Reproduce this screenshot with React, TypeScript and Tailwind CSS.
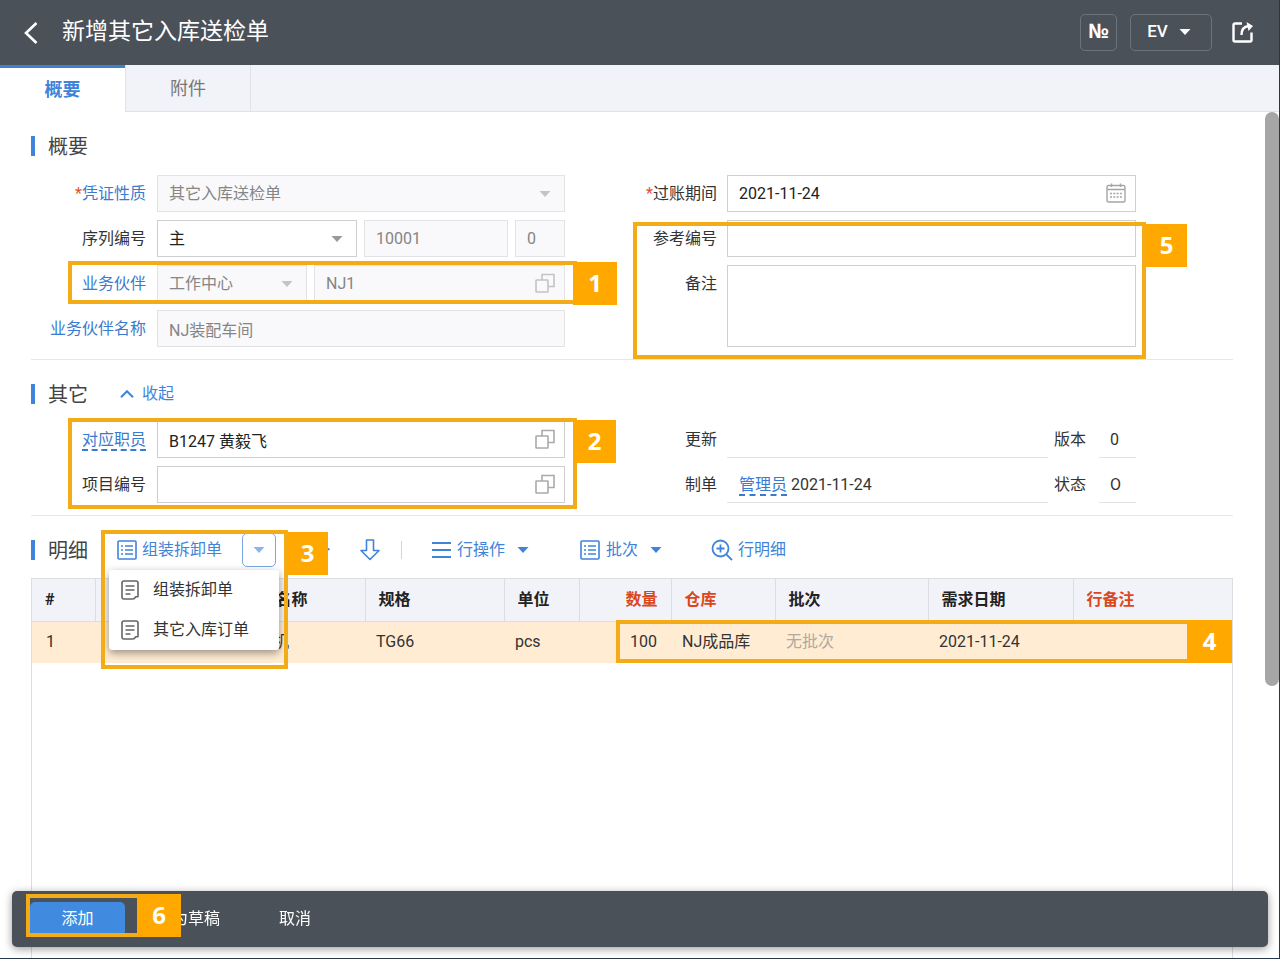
import type { ReactNode } from 'react';
import { clsx } from 'clsx';

function Caret({ className }: { className?: string }) {
  return (
    <svg viewBox="0 0 12 6" className={clsx('w-3 h-[6px] shrink-0 pointer-events-none', className)} fill="currentColor">
      <path d="M0.5 0h11L6 6z" />
    </svg>
  );
}

function CopyIcon({ className }: { className?: string }) {
  return (
    <svg viewBox="0 0 20 20" className={clsx('w-5 h-5', className)} fill="none" stroke="currentColor" strokeWidth="1.6">
      <rect x="1" y="7" width="12" height="12" rx="0.5" />
      <path d="M7 7V1.500h12v12h-6" />
    </svg>
  );
}

function CalendarIcon() {
  return (
    <svg viewBox="0 0 20 20" className="w-5 h-5 text-[#a5a5a5]" fill="none" stroke="currentColor" strokeWidth="1.4">
      <rect x="1" y="2.500" width="18" height="16.500" rx="1.500" />
      <path d="M1 6.500h18M5.500 0.500v3.500M14.500 0.500v3.500" />
      <path d="M4 10.500h12M4 14h12" strokeWidth="1.500" strokeDasharray="2 1.300" />
    </svg>
  );
}

function ListIcon() {
  return (
    <svg viewBox="0 0 20 20" className="w-5 h-5 shrink-0" fill="none" stroke="currentColor" strokeWidth="1.6">
      <rect x="1" y="1" width="18" height="18" rx="1" />
      <path d="M4 6h2M8 6h8M4 10h2M8 10h8M4 14h2M8 14h8" strokeWidth="1.4" />
    </svg>
  );
}

function NoteIcon() {
  return (
    <svg viewBox="0 0 18 20" className="w-[18px] h-5 shrink-0 text-[#666]" fill="none" stroke="currentColor" strokeWidth="1.6">
      <path d="M3 1h12a2 2 0 0 1 2 2v13.500l-2.500.5c-.5 1.500-1.500 2-3 2H3c-1.200 0-2-.8-2-2V3c0-1.200.8-2 2-2z" />
      <path d="M4.500 6h9M4.500 10h9M4.500 14h5" />
    </svg>
  );
}

function ArrowIcon({ up }: { up?: boolean }) {
  return (
    <svg
      viewBox="0 0 20 22"
      className={clsx('w-5 h-[22px]', up && 'rotate-180')}
      fill="none"
      stroke="currentColor"
      strokeWidth="1.6"
      strokeLinejoin="round"
    >
      <path d="M6.500 1h7v10.500H19L10 20.500 1 11.500h5.500z" />
    </svg>
  );
}

function Badge({ n, className }: { n: number; className: string }) {
  return (
    <span
      className={clsx(
        'absolute flex items-center justify-center pb-0.5 bg-[#ffa900] text-white font-bold text-2xl leading-none',
        "font-['Open_Sans',sans-serif]",
        className,
      )}
    >
      {n}
    </span>
  );
}

function Callout({ n, className, badge }: { n: number; className: string; badge: string }) {
  return (
    <div className={clsx('absolute z-20 border-4 border-[#f3ab18] pointer-events-none', className)}>
      <Badge n={n} className={badge} />
    </div>
  );
}

function SectionTitle({ children }: { children: ReactNode }) {
  return (
    <h2 className="flex items-center h-5 border-l-4 border-[#3f84da] pt-0.5 pl-[13px] text-xl leading-5 text-[#444]">
      {children}
    </h2>
  );
}

type FieldLabelProps = {
  htmlFor: string;
  children: ReactNode;
  right?: boolean;
  link?: boolean;
  dashed?: boolean;
  required?: boolean;
};

function FieldLabel({ htmlFor, children, right, link, dashed, required }: FieldLabelProps) {
  return (
    <label
      htmlFor={htmlFor}
      className={clsx(
        'shrink-0 h-[37px] leading-[37px] text-right whitespace-nowrap',
        right ? 'w-[152px] mr-[10px]' : 'w-[115px] mr-[11px]',
        link ? 'text-[#3a7bd0]' : 'text-[#333]',
      )}
    >
      {required && <span className="text-[#e8502e]">*</span>}
      <span className={clsx(dashed && 'border-b-2 border-dashed border-[#3a7bd0]')}>{children}</span>
    </label>
  );
}

const box = 'w-full h-[37px] border px-[11px] outline-none';
const enabled = 'bg-white border-[#cfcfd2] text-[#222]';
const disabledBox = 'bg-[#f9f9fb] border-[#e3e3e6] text-[#858585]';

type SelectBoxProps = { id: string; value: string; disabled?: boolean; label?: string; className?: string };

function SelectBox({ id, value, disabled, label, className }: SelectBoxProps) {
  return (
    <div className={clsx('relative', className)}>
      <select
        id={id}
        aria-label={label}
        disabled={disabled}
        className={clsx(box, 'appearance-none opacity-100', disabled ? disabledBox : enabled)}
      >
        <option>{value}</option>
      </select>
      <Caret className={clsx('absolute right-[14px] top-4', disabled ? 'text-[#c4c4c6]' : 'text-[#999]')} />
    </div>
  );
}

type TextBoxProps = {
  id: string;
  value?: string;
  disabled?: boolean;
  label?: string;
  icon?: ReactNode;
  className?: string;
};

function TextBox({ id, value = '', disabled, label, icon, className }: TextBoxProps) {
  return (
    <div className={clsx('relative', className)}>
      <input
        id={id}
        aria-label={label}
        disabled={disabled}
        defaultValue={value}
        className={clsx(box, disabled ? disabledBox : enabled)}
      />
      {icon && <span className="absolute right-[10px] top-2">{icon}</span>}
    </div>
  );
}

const columns = [
  { name: '#', width: 'w-[63px]' },
  { name: '', width: 'w-[167px]' },
  { name: '名称', width: 'w-[103px]' },
  { name: '规格', width: 'w-[139px]' },
  { name: '单位', width: 'w-[75px]' },
  { name: '数量', width: 'w-[92px]', red: true, numeric: true },
  { name: '仓库', width: 'w-[104px]', red: true },
  { name: '批次', width: 'w-[153px]' },
  { name: '需求日期', width: 'w-[145px]' },
  { name: '行备注', width: 'w-auto', red: true },
];

const row = ['1', '', '机', 'TG66', 'pcs', '100', 'NJ成品库', '无批次', '2021-11-24', ''];

export default function App() {
  return (
    <div className="relative min-h-screen flex flex-col bg-white border-r border-b border-[#26384a] text-base text-[#333] font-[Roboto,'Noto_Sans_CJK_SC',sans-serif]">
      <header className="flex items-center h-[65px] bg-[#4a5159] pl-6 pr-[26px] text-white">
        <button aria-label="返回" className="mr-6">
          <svg viewBox="0 0 14 22" className="w-[14px] h-[22px]" fill="none" stroke="currentColor" strokeWidth="2.600">
            <path d="M12.500 1L2 11l10.500 10" />
          </svg>
        </button>
        <h1 className="text-[23px] leading-8 pb-0.5">新增其它入库送检单</h1>
        <button className="flex items-center justify-center ml-auto mr-[13px] w-[37px] h-[37px] pb-1 border border-[#6b747d] rounded-[5px] font-['Open_Sans',sans-serif] font-bold text-xl">
          №
        </button>
        <button className="flex items-center justify-center gap-[11px] w-[82px] h-[37px] pb-0.5 pr-1 mr-5 border border-[#6b747d] rounded-[5px] font-medium text-[17px]">
          EV
          <Caret />
        </button>
        <button aria-label="分享">
          <svg viewBox="0 0 21 21" className="w-[21px] h-[21px]" fill="none" stroke="currentColor" strokeWidth="2.400">
            <path d="M10 1.500H3A1.500 1.500 0 0 0 1.500 3v15A1.500 1.500 0 0 0 3 19.500h15a1.500 1.500 0 0 0 1.500-1.500v-7.500" />
            <path d="M9.500 13c0-6 2.500-8.500 7-9" />
            <path d="M14.500 0l6.500 4-4.500 5z" fill="currentColor" stroke="none" />
          </svg>
        </button>
      </header>

      <nav className="flex h-[47px] bg-[#f2f3f8] text-lg">
        <button className="w-[125px] bg-white border-t-[3px] border-[#3f7fd0] text-[#3f84da] font-bold">概要</button>
        <button className="w-[126px] pt-0.5 border-x border-b border-[#e1e2e7] text-[#777]">附件</button>
        <div className="flex-1 border-b border-[#e1e2e7]" />
      </nav>

      <div className="flex-1 flex">
        <main className="flex-1 min-w-0 flex flex-col pl-[31px] pr-8">
          {/* Summary */}
          <section className="pt-6 pb-3 border-b border-[#e6e6e8]">
            <SectionTitle>概要</SectionTitle>
            <div className="grid grid-cols-[534fr_571fr] mt-[19px] pr-[97px]">
              <div className="flex flex-col gap-2">
                <div className="flex">
                  <FieldLabel htmlFor="nature" link required>凭证性质</FieldLabel>
                  <SelectBox id="nature" value="其它入库送检单" disabled className="flex-1" />
                </div>
                <div className="flex">
                  <FieldLabel htmlFor="series">序列编号</FieldLabel>
                  <div className="flex flex-1 gap-[7px]">
                    <SelectBox id="series" value="主" className="w-[200px]" />
                    <TextBox id="number" label="编号" value="10001" disabled className="flex-1" />
                    <TextBox id="suffix" label="后缀" value="0" disabled className="w-[50px]" />
                  </div>
                </div>
                <div className="relative flex">
                  <FieldLabel htmlFor="partner" link>业务伙伴</FieldLabel>
                  <div className="flex flex-1 gap-[7px]">
                    <SelectBox id="partner" value="工作中心" disabled className="w-[150px]" />
                    <TextBox
                      id="partnerCode"
                      label="业务伙伴编号"
                      value="NJ1"
                      disabled
                      icon={<CopyIcon className="text-[#c4c4c6]" />}
                      className="flex-1"
                    />
                  </div>
                  <Callout n={1} className="left-[37px] -right-3 -top-1 -bottom-0.5" badge="left-full -top-[3px] w-11 h-[43px]" />
                </div>
                <div className="flex">
                  <FieldLabel htmlFor="partnerName" link>业务伙伴名称</FieldLabel>
                  <TextBox id="partnerName" value="NJ装配车间" disabled className="flex-1" />
                </div>
              </div>

              <div className="flex flex-col gap-2">
                <div className="flex">
                  <FieldLabel htmlFor="period" right required>过账期间</FieldLabel>
                  <TextBox id="period" value="2021-11-24" icon={<CalendarIcon />} className="flex-1" />
                </div>
                <div className="relative flex flex-1 flex-col gap-2">
                  <div className="flex">
                    <FieldLabel htmlFor="reference" right>参考编号</FieldLabel>
                    <TextBox id="reference" className="flex-1" />
                  </div>
                  <div className="flex flex-1">
                    <FieldLabel htmlFor="remark" right>备注</FieldLabel>
                    <textarea id="remark" className="flex-1 min-w-0 resize-none border border-[#cfcfd2] px-[11px] outline-none" />
                  </div>
                  <Callout n={5} className="left-[68px] -right-[10px] top-0.5 -bottom-3" badge="left-full -top-0.5 w-[41px] h-[43px] ml-1" />
                </div>
              </div>
            </div>
          </section>

          {/* Other */}
          <section className="pt-6 pb-3 border-b border-[#e6e6e8]">
            <div className="flex items-center h-5">
              <SectionTitle>其它</SectionTitle>
              <button className="flex items-center gap-2 ml-8 text-[#3f84da]">
                <svg viewBox="0 0 14 8" className="w-[14px] h-2" fill="none" stroke="currentColor" strokeWidth="2">
                  <path d="M1 7.200l6-6 6 6" />
                </svg>
                收起
              </button>
            </div>
            <div className="grid grid-cols-[534fr_571fr] mt-[17px] pr-[97px]">
              <div className="relative flex flex-col gap-2">
                <div className="flex">
                  <FieldLabel htmlFor="staff" link dashed>对应职员</FieldLabel>
                  <TextBox id="staff" value="B1247 黄毅飞" icon={<CopyIcon className="text-[#aaa]" />} className="flex-1" />
                </div>
                <div className="flex">
                  <FieldLabel htmlFor="project">项目编号</FieldLabel>
                  <TextBox id="project" icon={<CopyIcon className="text-[#aaa]" />} className="flex-1" />
                </div>
                <Callout n={2} className="left-[37px] -right-3 -top-[3px] -bottom-[6px]" badge="left-full -top-0.5 w-[43px] h-[43px]" />
              </div>
              <div className="flex flex-col gap-2">
                <div className="flex">
                  <FieldLabel htmlFor="updated" right>更新</FieldLabel>
                  <output id="updated" className="flex-1 h-[37px] border-b border-[#e3e3e6]" />
                  <label htmlFor="version" className="w-[51px] pl-[6px] leading-[37px]">版本</label>
                  <output id="version" className="w-[37px] h-[37px] border-b border-[#e3e3e6] pl-[11px] leading-[37px]">0</output>
                </div>
                <div className="flex">
                  <FieldLabel htmlFor="creator" right>制单</FieldLabel>
                  <output id="creator" className="flex-1 h-[37px] border-b border-[#e3e3e6] pl-3 leading-[37px]">
                    <a href="#creator" className="text-[#3a7bd0] border-b-2 border-dashed border-[#3a7bd0]">管理员</a> 2021-11-24
                  </output>
                  <label htmlFor="status" className="w-[51px] pl-[6px] leading-[37px]">状态</label>
                  <output id="status" className="w-[37px] h-[37px] border-b border-[#e3e3e6] pl-[11px] leading-[37px]">O</output>
                </div>
              </div>
            </div>
          </section>

          {/* Details */}
          <section className="flex-1 flex flex-col pt-[17px]">
            <div className="flex items-center h-[34px] text-[#3f84da]">
              <SectionTitle>明细</SectionTitle>
              <div className="relative flex items-center ml-[29px]">
                <button className="flex items-center gap-[5px]">
                  <ListIcon />
                  组装拆卸单
                </button>
                <button
                  aria-label="展开"
                  className="flex items-center justify-center w-[34px] h-[34px] ml-5 border border-[#7ba8e4] rounded-[5px] text-[#8db5ea]"
                >
                  <Caret />
                </button>
                <ul className="absolute z-10 top-[37px] -left-2 w-[170px] bg-white rounded-[3px] shadow-[0_3px_9px_rgba(0,0,0,0.4)] text-[#333]">
                  {['组装拆卸单', '其它入库订单'].map((item) => (
                    <li key={item}>
                      <button className="flex items-center gap-[14px] w-full h-10 pl-3">
                        <NoteIcon />
                        {item}
                      </button>
                    </li>
                  ))}
                </ul>
                <Callout n={3} className="-left-4 -right-3 -top-[3px] h-[139px]" badge="left-full -top-0.5 w-[41px] h-[43px] ml-[3px]" />
              </div>
              <button aria-label="上移" className="ml-[34px]">
                <ArrowIcon up />
              </button>
              <button aria-label="下移" className="ml-[30px]">
                <ArrowIcon />
              </button>
              <span className="w-px h-[18px] mx-[21px] bg-[#d5d5d8]" />
              <button className="flex items-center gap-[6px] ml-[9px]">
                <svg viewBox="0 0 19 18" className="w-[19px] h-[18px]" stroke="currentColor" strokeWidth="1.800">
                  <path d="M0 2h19M0 9h19M0 16h19" />
                </svg>
                行操作
                <Caret className="ml-[6px]" />
              </button>
              <button className="flex items-center gap-[6px] ml-[51px]">
                <ListIcon />
                批次
                <Caret className="ml-[6px]" />
              </button>
              <button className="flex items-center gap-[5px] ml-[49px]">
                <svg viewBox="0 0 22 22" className="w-[22px] h-[22px]" fill="none" stroke="currentColor" strokeWidth="1.800">
                  <circle cx="9.500" cy="9.500" r="8" />
                  <path d="M9.500 5.500v8M5.500 9.500h8M15.300 15.300l5.700 5.700" />
                </svg>
                行明细
              </button>
            </div>

            <div className="relative flex-1 mt-[11px] border-x border-t border-[#dcdde2]">
              <table className="w-full table-fixed">
                <thead>
                  <tr className="h-[42px] bg-[#f2f3f8]">
                    {columns.map((col, i) => (
                      <th
                        key={i}
                        className={clsx(
                          'px-[13px] font-bold whitespace-nowrap border-b border-r border-[#dcdde2] last:border-r-0',
                          col.width,
                          col.red ? 'text-[#d9481c]' : 'text-[#222]',
                          col.numeric ? 'text-right' : 'text-left',
                        )}
                      >
                        {col.name}
                      </th>
                    ))}
                  </tr>
                </thead>
                <tbody>
                  <tr className="h-[42px] bg-[#ffecd3]">
                    {row.map((cell, i) => (
                      <td
                        key={i}
                        className={clsx(
                          'whitespace-nowrap',
                          i === 0 || columns[i].numeric ? 'px-[14px]' : 'px-[11px]',
                          columns[i].numeric && 'text-right',
                          cell === '无批次' ? 'text-[#b0a99f]' : 'text-[#333]',
                        )}
                      >
                        {cell}
                      </td>
                    ))}
                  </tr>
                </tbody>
              </table>
              <Callout n={4} className="left-[584px] right-0 top-[41px] h-[43px]" badge="-right-1 -top-1 w-[45px] h-[43px]" />
            </div>
          </section>
        </main>

        <div className="w-[14px] shrink-0">
          <div className="h-[574px] rounded-full bg-[#a6a6a6]" />
        </div>
      </div>

      <footer className="fixed z-30 left-3 right-3 bottom-3 flex items-center h-14 px-4 rounded-[5px] bg-[#4a5159] shadow-[0_2px_9px_rgba(0,0,0,0.4)] text-white">
        <div className="relative mr-[30px]">
          <button className="block w-[95px] h-[34px] ml-0.5 rounded-[5px] bg-[#408be0]">添加</button>
          <Callout n={6} className="-left-0.5 -right-[56px] -top-2 -bottom-px" badge="-right-1 -top-1 w-11 h-[43px]" />
        </div>
        <button className="w-[65px] text-right whitespace-nowrap">为草稿</button>
        <button className="ml-[59px]">取消</button>
      </footer>
    </div>
  );
}
